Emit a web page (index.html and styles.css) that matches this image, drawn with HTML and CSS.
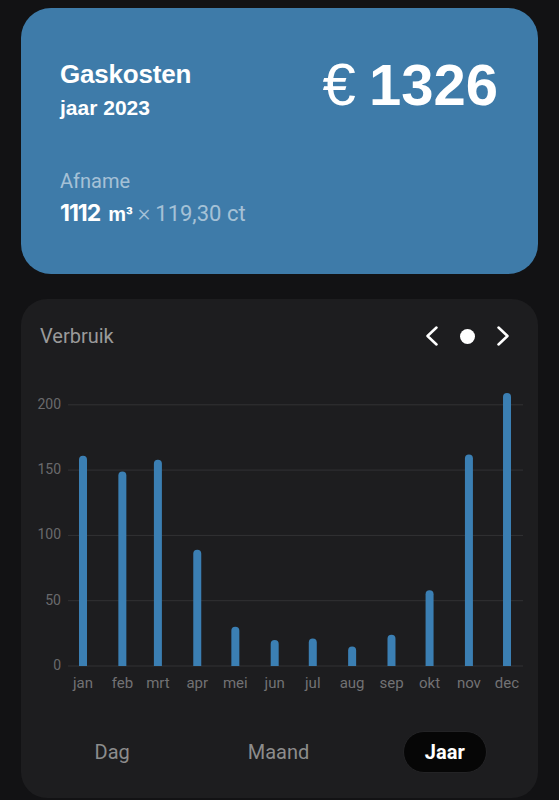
FILE: index.html
```html
<!DOCTYPE html>
<html lang="nl">
<head>
    <meta charset="UTF-8">
    <meta name="viewport" content="width=device-width, initial-scale=1.0">
    <title>Gaskosten</title>
    <link rel="stylesheet" href="styles.css">
</head>
<body>
    <div class="card summary">
        <div class="summary-top">
            <div class="title">
                <h1>Gaskosten</h1>
                <h2>jaar 2023</h2>
            </div>
            <div class="total"><span class="euro">€</span> 1326</div>
        </div>
        <div class="usage">
            <div class="usage-label">Afname</div>
            <div class="usage-value">
                <span class="amount">1112</span><span class="unit">m³</span><span class="times">×</span><span class="price">119,30 ct</span>
            </div>
        </div>
    </div>

    <div class="card chart-card">
        <div class="chart-header">
            <span class="chart-title">Verbruik</span>
            <div class="nav">
                <svg class="chevron" width="12" height="20" viewBox="0 0 12 20"><path d="M10.5 1.5 L1.5 10 L10.5 18.5"/></svg>
                <span class="dot"></span>
                <svg class="chevron" width="12" height="20" viewBox="0 0 12 20"><path d="M1.5 1.5 L10.5 10 L1.5 18.5"/></svg>
            </div>
        </div>

        <svg id="chart" class="chart" width="517" height="315" viewBox="0 0 517 315"></svg>

        <div class="tabs">
            <span class="tab">Dag</span>
            <span class="tab">Maand</span>
            <span class="tab active">Jaar</span>
        </div>
    </div>

    <script>
        const months = ["jan", "feb", "mrt", "apr", "mei", "jun", "jul", "aug", "sep", "okt", "nov", "dec"];
        const dayOfYear = [0, 31, 59, 90, 120, 151, 181, 212, 243, 273, 304, 334];
        const values = [161, 149, 158, 89, 30, 20, 21, 15, 24, 58, 162, 209];

        const zeroY = 281;
        const scale = 65.3 / 50; // px per m³
        const startX = 62;
        const dayWidth = 1.2695;

        let html = "";

        // grid + y labels
        for (let v = 0; v <= 200; v += 50) {
            const y = (zeroY - v * scale).toFixed(1);
            html += `<line class="grid" x1="47" x2="502" y1="${y}" y2="${y}"/>`;
            html += `<text class="ylabel" x="40" y="${(parseFloat(y) + 4).toFixed(1)}">${v}</text>`;
        }

        // bars + month labels
        for (let i = 0; i < months.length; i++) {
            const x = startX + dayOfYear[i] * dayWidth;
            const top = zeroY - values[i] * scale;
            html += `<path class="bar" d="M${x - 4} ${zeroY} V${top + 4} A4 4 0 0 1 ${x + 4} ${top + 4} V${zeroY} Z"/>`;
            html += `<text class="xlabel" x="${x.toFixed(1)}" y="303">${months[i]}</text>`;
        }

        document.getElementById("chart").innerHTML = html;
    </script>
</body>
</html>
```

FILE: styles.css
```css
body {
    margin: 0;
    padding: 8px 21px 0;
    background-color: #121214;
    font-family: Roboto, "Noto Sans", sans-serif;
}

.card {
    box-sizing: border-box;
    width: 517px;
}

.summary {
    height: 266px;
    padding: 51px 40px 0 39px;
    border-radius: 30px;
    background-color: #3e7ba9;
    color: #fff;
}

.summary-top {
    display: flex;
    justify-content: space-between;
    align-items: flex-start;
}

h1 {
    margin: 0;
    font: bold 26px/30px "Liberation Sans", Arial, sans-serif;
    letter-spacing: -0.2px;
}

h2 {
    margin: 6px 0 0;
    font: bold 21px/26px "Liberation Sans", Arial, sans-serif;
}

.total {
    margin-top: -3px;
    font: bold 58px/58px "Liberation Sans", Arial, sans-serif;
    white-space: nowrap;
}

.euro {
    font-weight: normal;
    font-size: 60px;
    margin-right: -3px;
}

.usage {
    margin-top: 48px;
}

.usage-label {
    font-size: 20px;
    line-height: 24px;
    color: rgba(255, 255, 255, 0.55);
}

.usage-value {
    margin-top: 6px;
    line-height: 28px;
    white-space: nowrap;
}

.amount {
    font: bold 23px Inter, "Liberation Sans", sans-serif;
    letter-spacing: -1px;
}

.unit {
    margin-left: 8px;
    font: bold 20px "Liberation Sans", Arial, sans-serif;
}

.times {
    margin: 0 5px 0 5px;
    font-size: 24px;
    font-weight: 300;
    color: rgba(255, 255, 255, 0.55);
}

.price {
    font-size: 22px;
    color: rgba(255, 255, 255, 0.55);
}

.chart-card {
    margin-top: 25px;
    padding: 25px 0;
    border-radius: 26px;
    background-color: #1d1d1f;
}

.chart-header {
    display: flex;
    justify-content: space-between;
    align-items: center;
    height: 24px;
    padding: 0 29px 0 19px;
}

.chart-title {
    font-size: 20px;
    line-height: 24px;
    color: #9a9a9a;
}

.nav {
    display: flex;
    align-items: center;
    gap: 22px;
}

.chevron path {
    fill: none;
    stroke: #fff;
    stroke-width: 2.5;
    stroke-linecap: round;
    stroke-linejoin: round;
}

.dot {
    width: 15px;
    height: 15px;
    border-radius: 50%;
    background-color: #fff;
}

.chart {
    display: block;
    margin-top: 37px;
}

.grid {
    stroke: #323234;
    stroke-width: 1;
}

.bar {
    fill: #3b7fb3;
}

.ylabel {
    font: 14px Roboto, sans-serif;
    fill: #6a6a6c;
    text-anchor: end;
}

.xlabel {
    font: 15px Roboto, sans-serif;
    fill: #727274;
    text-anchor: middle;
}

.tabs {
    display: grid;
    grid-template-columns: repeat(3, 1fr);
    justify-items: center;
    margin-top: 31px;
    padding: 0 10px 0 8px;
}

.tab {
    font-size: 20px;
    line-height: 42px;
    color: #8c8c8c;
}

.tab.active {
    box-sizing: border-box;
    width: 84px;
    height: 42px;
    border: 1px solid #232325;
    border-radius: 21px;
    background-color: #060606;
    color: #fff;
    font-weight: bold;
    text-align: center;
    line-height: 40px;
}
```
